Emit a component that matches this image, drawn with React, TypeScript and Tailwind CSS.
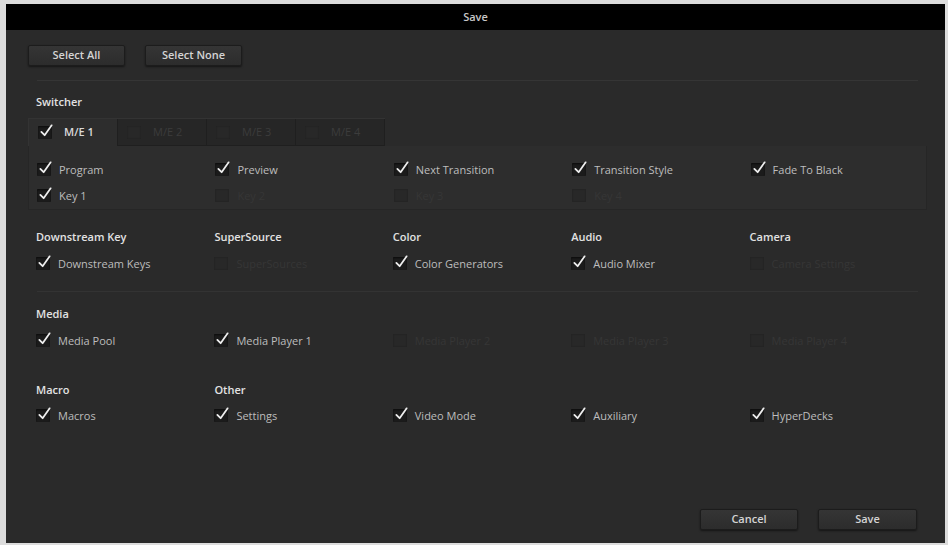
import React from "react";

const font = { fontFamily: '"Open Sans", "Noto Sans", sans-serif' };

function Check({ on = true, dim = false }: { on?: boolean; dim?: boolean }) {
  return (
    <span
      className={`relative inline-block w-[14px] h-[13px] shrink-0 rounded-[1px] ${
        dim ? "bg-[#282828] shadow-[inset_0_0_2px_rgba(0,0,0,0.3)]" : "bg-[#1b1b1b] shadow-[inset_0_1px_2px_rgba(0,0,0,0.6)]"
      }`}
    >
      {on && (
        <svg viewBox="0 0 16 16" className="absolute left-[1px] top-[-3px] w-[15px] h-[15px]">
          <path d="M2.5 9.5 L6 13 L13.5 2.5" fill="none" stroke="#eeeeee" strokeWidth="1.9" strokeLinecap="round" strokeLinejoin="round" />
        </svg>
      )}
    </span>
  );
}

function Item({ label, on = true }: { label: string; on?: boolean }) {
  return (
    <div className="flex items-center h-[18px] gap-[8px]">
      <Check on={on} dim={!on} />
      <span className={`text-[11px] leading-none ${on ? "text-[#bdbdbd]" : "text-[#363636]"}`}>{label}</span>
    </div>
  );
}

function Empty() {
  return <div className="h-[18px]" />;
}

function Header({ children }: { children: React.ReactNode }) {
  return <div className="h-[16px] leading-[16px] text-[11px] font-semibold text-[#e2e2e2]">{children}</div>;
}

function Btn({ label, w }: { label: string; w: string }) {
  return (
    <button
      className={`${w} h-[21px] rounded-[2px] border border-[#1c1c1c] bg-gradient-to-b from-[#353535] to-[#2c2c2c] shadow-[0_1px_2px_rgba(0,0,0,0.5)] text-[11px] font-semibold text-[#d4d4d4]`}
    >
      {label}
    </button>
  );
}

function Tab({ label, active = false }: { label: string; active?: boolean }) {
  return (
    <div
      className={`w-[89px] h-[27px] flex items-center pl-[9px] gap-[12px] border-r border-[#1f1f1f] ${
        active ? "bg-[#2d2d2d] w-[87px]" : "bg-[#262626] shadow-[inset_0_-1px_0_#1f1f1f]"
      }`}
    >
      <Check on={active} dim={!active} />
      <span className={`text-[11px] ${active ? "font-semibold text-[#dadada]" : "text-[#3c3c3c]"}`}>{label}</span>
    </div>
  );
}

export default function App() {
  return (
    <div className="w-[948px] h-[545px] bg-[#dcdcdc] pt-[4px] pl-[6px] pr-[3px] pb-[2px]" style={font}>
      <div className="w-full h-full bg-[#2a2a2a] flex flex-col">
        {/* Title bar */}
        <div className="h-[26px] bg-black flex items-center justify-center text-[11px] font-semibold text-[#c8c8c8]">
          Save
        </div>

        <div className="flex-1 flex flex-col pl-[22px] pr-[18px]">
          <div className="mt-[15px] flex gap-[20px]">
            <Btn label="Select All" w="w-[97px]" />
            <Btn label="Select None" w="w-[97px]" />
          </div>

          <div className="mt-[14px] mx-[9px] h-px bg-[#353535]" />

          <div className="mt-[13px] pl-[8px]">
            <Header>Switcher</Header>
          </div>

          {/* Tabs */}
          <div className="mt-[8px] flex">
            <div className="flex border-t border-l border-[#333333]">
              <Tab label="M/E 1" active />
              <Tab label="M/E 2" />
              <Tab label="M/E 3" />
              <Tab label="M/E 4" />
            </div>
          </div>

          <div className="h-[64px] bg-[#2d2d2d] border border-t-0 border-[#262626] pl-[8px] pt-[14px] flex flex-col gap-[8px]">
            <div className="grid grid-cols-5 w-[892px]">
              <Item label="Program" />
              <Item label="Preview" />
              <Item label="Next Transition" />
              <Item label="Transition Style" />
              <Item label="Fade To Black" />
            </div>
            <div className="grid grid-cols-5 w-[892px]">
              <Item label="Key 1" />
              <Item label="Key 2" on={false} />
              <Item label="Key 3" on={false} />
              <Item label="Key 4" on={false} />
              <Empty />
            </div>
          </div>

          {/* Downstream etc */}
          <div className="mt-[19px] pl-[8px] grid grid-cols-5 w-[900px]">
            <Header>Downstream Key</Header>
            <Header>SuperSource</Header>
            <Header>Color</Header>
            <Header>Audio</Header>
            <Header>Camera</Header>
          </div>
          <div className="mt-[9px] pl-[8px] grid grid-cols-5 w-[900px]">
            <Item label="Downstream Keys" />
            <Item label="SuperSources" on={false} />
            <Item label="Color Generators" />
            <Item label="Audio Mixer" />
            <Item label="Camera Settings" on={false} />
          </div>

          <div className="mt-[19px] mx-[9px] h-px bg-[#333333]" />

          <div className="mt-[14px] pl-[8px]">
            <Header>Media</Header>
          </div>
          <div className="mt-[9px] pl-[8px] grid grid-cols-5 w-[900px]">
            <Item label="Media Pool" />
            <Item label="Media Player 1" />
            <Item label="Media Player 2" on={false} />
            <Item label="Media Player 3" on={false} />
            <Item label="Media Player 4" on={false} />
          </div>

          <div className="mt-[33px] pl-[8px] grid grid-cols-5 w-[900px]">
            <Header>Macro</Header>
            <Header>Other</Header>
          </div>
          <div className="mt-[8px] pl-[8px] grid grid-cols-5 w-[900px]">
            <Item label="Macros" />
            <Item label="Settings" />
            <Item label="Video Mode" />
            <Item label="Auxiliary" />
            <Item label="HyperDecks" />
          </div>

          <div className="mt-auto mb-[13px] mr-[10px] flex justify-end gap-[20px]">
            <Btn label="Cancel" w="w-[98px]" />
            <Btn label="Save" w="w-[99px]" />
          </div>
        </div>
      </div>
    </div>
  );
}
